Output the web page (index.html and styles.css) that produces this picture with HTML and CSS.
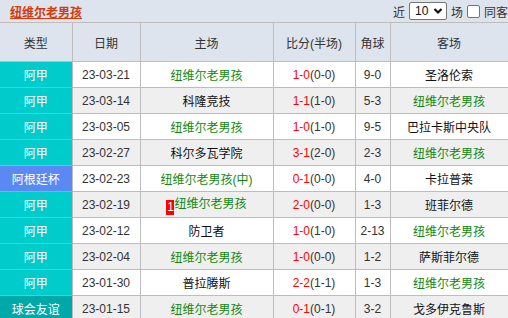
FILE: index.html
```html
<!DOCTYPE html>
<html lang="zh-CN">
<head>
<meta charset="utf-8">
<title>纽维尔老男孩 近期战绩</title>
<link rel="stylesheet" href="styles.css">
</head>
<body>
<div class="page">
  <div class="topbar">
    <a class="team-title" href="#">纽维尔老男孩</a>
    <div class="controls">
      <span>近</span>
      <span class="select">10<svg class="caret" width="10" height="8" viewBox="0 0 10 8"><path d="M1.5 2 L5 5.5 L8.5 2" fill="none" stroke="#111" stroke-width="2.2"/></svg></span>
      <span>场</span>
      <span class="checkbox"></span>
      <span>同客</span>
    </div>
  </div>
  <table class="records">
    <colgroup>
      <col class="c-type"><col class="c-date"><col class="c-home"><col class="c-score"><col class="c-corner"><col class="c-away">
    </colgroup>
    <thead>
      <tr><th>类型</th><th>日期</th><th>主场</th><th>比分(半场)</th><th>角球</th><th>客场</th></tr>
    </thead>
    <tbody>
      <tr><td class="type">阿甲</td><td>23-03-21</td><td class="me">纽维尔老男孩</td><td><span class="ft">1-0</span>(0-0)</td><td>9-0</td><td class="team">圣洛伦索</td></tr>
      <tr class="alt"><td class="type">阿甲</td><td>23-03-14</td><td class="team">科隆竞技</td><td><span class="ft">1-1</span>(1-0)</td><td>5-3</td><td class="me">纽维尔老男孩</td></tr>
      <tr><td class="type">阿甲</td><td>23-03-05</td><td class="me">纽维尔老男孩</td><td><span class="ft">1-0</span>(1-0)</td><td>9-5</td><td class="team">巴拉卡斯中央队</td></tr>
      <tr class="alt"><td class="type">阿甲</td><td>23-02-27</td><td class="team">科尔多瓦学院</td><td><span class="ft">3-1</span>(2-0)</td><td>2-3</td><td class="me">纽维尔老男孩</td></tr>
      <tr><td class="type cup">阿根廷杯</td><td>23-02-23</td><td class="me">纽维尔老男孩(中)</td><td><span class="ft">0-1</span>(0-0)</td><td>4-0</td><td class="team">卡拉普莱</td></tr>
      <tr class="alt"><td class="type">阿甲</td><td>23-02-19</td><td class="me"><span class="redcard">1</span>纽维尔老男孩</td><td><span class="ft">2-0</span>(0-0)</td><td>1-3</td><td class="team">班菲尔德</td></tr>
      <tr><td class="type">阿甲</td><td>23-02-12</td><td class="team">防卫者</td><td><span class="ft">1-0</span>(1-0)</td><td>2-13</td><td class="me">纽维尔老男孩</td></tr>
      <tr class="alt"><td class="type">阿甲</td><td>23-02-04</td><td class="me">纽维尔老男孩</td><td><span class="ft">1-0</span>(0-0)</td><td>1-2</td><td class="team">萨斯菲尔德</td></tr>
      <tr><td class="type">阿甲</td><td>23-01-30</td><td class="team">普拉腾斯</td><td><span class="ft">2-2</span>(1-1)</td><td>1-3</td><td class="me">纽维尔老男孩</td></tr>
      <tr class="alt"><td class="type friendly">球会友谊</td><td>23-01-15</td><td class="me">纽维尔老男孩</td><td><span class="ft">0-1</span>(0-1)</td><td>3-2</td><td class="team">戈多伊克鲁斯</td></tr>
    </tbody>
  </table>
</div>
</body>
</html>
```

FILE: styles.css
```css
html, body {
  margin: 0;
  padding: 0;
  overflow: hidden;
  background: #dee4ed;
}
.page {
  width: 508px;
  font-family: "Liberation Sans", "Noto Sans CJK SC", sans-serif;
  font-size: 12px;
  color: #333;
}
.topbar {
  height: 22px;
  display: flex;
  align-items: center;
  background: #dee4ed;
  white-space: nowrap;
}
.team-title {
  margin-left: 10px;
  color: #d43a0a;
  font-weight: bold;
  text-decoration: underline;
  font-size: 12px;
}
.controls {
  margin-left: auto;
  display: flex;
  align-items: center;
  gap: 4px;
  color: #333;
  font-size: 12px;
}
.select {
  display: inline-flex;
  align-items: center;
  justify-content: space-between;
  box-sizing: border-box;
  width: 38px;
  height: 18px;
  padding: 0 3px 0 5px;
  border: 1px solid #767676;
  border-radius: 2px;
  background: #fff;
  color: #111;
  font-size: 12px;
}
.checkbox {
  display: inline-block;
  box-sizing: border-box;
  width: 13px;
  height: 13px;
  border: 1px solid #767676;
  border-radius: 2px;
  background: #fff;
}
.records {
  width: 508px;
  table-layout: fixed;
  border-collapse: collapse;
  background: #fff;
}
.c-type { width: 72px; }
.c-date { width: 68px; }
.c-home { width: 133px; }
.c-score { width: 82px; }
.c-corner { width: 35px; }
.c-away { width: 118px; }
.records th, .records td {
  border: 1px solid #bdbdbd;
  padding: 0;
  text-align: center;
  white-space: nowrap;
  overflow: hidden;
}
.records th {
  height: 38px;
  background: #dee4ed;
  font-weight: normal;
  color: #333;
}
.records td {
  height: 25px;
  color: #333;
}
.records th:first-child, .records td:first-child {
  border-left: 0;
}
.records tr.alt td { background: #efefef; }
.records td.type, .records tr.alt td.type {
  background: #00cccc;
  color: #fff;
  border-top-color: #3fd4d4;
  border-bottom-color: #3fd4d4;
}
.records td.type.cup, .records tr.alt td.type.cup { background: #5b88f3; }
.records td.type.friendly, .records tr.alt td.type.friendly { background: #00a9a9; }
.records td.me { color: #118811; }
.records td.team { color: #111; }
.ft { color: #f00; }
.redcard {
  display: inline-block;
  width: 8px;
  height: 15px;
  line-height: 15px;
  background: #f00;
  color: #fff;
  font-size: 12px;
  vertical-align: -3px;
  text-align: center;
}
```
